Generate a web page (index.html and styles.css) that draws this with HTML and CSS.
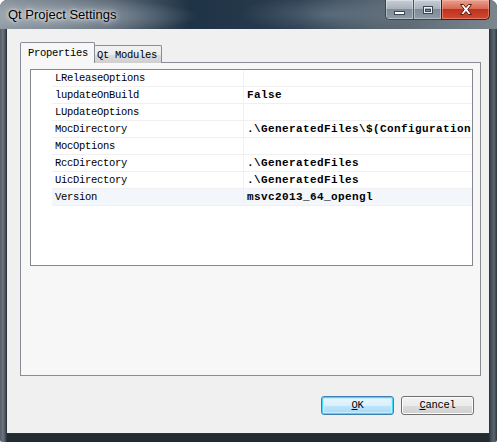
FILE: index.html
```html
<!DOCTYPE html>
<html>
<head>
<meta charset="utf-8">
<link rel="stylesheet" href="styles.css">
</head>
<body>
<div class="window">
  <div class="titlebar">
    <span class="title">Qt Project Settings</span>
    <div class="caption">
      <div class="cb-group">
        <div class="cb cb-min"><svg width="12" height="6" viewBox="0 0 12 6"><rect x="0.5" y="1.5" width="10" height="3" fill="#fff" stroke="#3b4550" stroke-width="1"/></svg></div>
        <div class="cb cb-max"><svg width="12" height="10" viewBox="0 0 12 10"><rect x="1.5" y="1.5" width="9" height="7" fill="none" stroke="#3b4550" stroke-width="1"/><rect x="2.5" y="2.5" width="7" height="5" fill="none" stroke="#eef" stroke-width="1"/><rect x="3.5" y="4.5" width="5" height="2" fill="none" stroke="#3b4550" stroke-width="1"/></svg></div>
      </div>
      <div class="cb cb-close"><svg width="14" height="11" viewBox="0 0 14 11"><path d="M1.5 0.5 H4.5 L7 3.5 L9.5 0.5 H12.5 L8.8 5.5 L12.5 10.5 H9.5 L7 7.5 L4.5 10.5 H1.5 L5.2 5.5 Z" fill="#fff" stroke="#5a1a10" stroke-width="1"/></svg></div>
    </div>
  </div>
  <div class="client">
    <div class="tabs">
      <div class="tab tab-active">Properties</div>
      <div class="tab">Qt Modules</div>
    </div>
    <div class="pane">
      <div class="tree">
        <div class="row"><div class="name">LReleaseOptions</div><div class="value"></div></div>
        <div class="row"><div class="name">lupdateOnBuild</div><div class="value">False</div></div>
        <div class="row"><div class="name">LUpdateOptions</div><div class="value"></div></div>
        <div class="row"><div class="name">MocDirectory</div><div class="value">.\GeneratedFiles\$(Configuration)</div></div>
        <div class="row"><div class="name">MocOptions</div><div class="value"></div></div>
        <div class="row"><div class="name">RccDirectory</div><div class="value">.\GeneratedFiles</div></div>
        <div class="row"><div class="name">UicDirectory</div><div class="value">.\GeneratedFiles</div></div>
        <div class="row row-hover"><div class="name">Version</div><div class="value">msvc2013_64_opengl</div></div>
      </div>
    </div>
    <div class="buttons">
      <div class="btn btn-default"><u>O</u>K</div>
      <div class="btn"><u>C</u>ancel</div>
    </div>
  </div>
</div>
</body>
</html>
```

FILE: styles.css
```css
html, body {
  margin: 0;
  padding: 0;
  background: #ffffff;
}

.window {
  width: 497px;
  height: 442px;
  box-sizing: border-box;
  padding: 0 8px 9px 7px;
  border-radius: 7px 7px 2px 2px;
  background:
    linear-gradient(90deg, #565f68 0px, #6c757e 3px, #3c4650 6px, transparent 7px, transparent 489px, #3a444e 490px, #5c666f 494px, #2e363e 497px),
    linear-gradient(180deg, #59636d 0px, #3f4b57 30px, #222a32 100%);
  display: flex;
  flex-direction: column;
  overflow: hidden;
}

.titlebar {
  height: 29px;
  position: relative;
  margin: 0 -8px 0 -7px;
  padding-left: 8px;
  display: flex;
  align-items: flex-start;
  background:
    radial-gradient(ellipse 140px 18px at 60px 16px, rgba(190,200,210,0.55), rgba(190,200,210,0) 100%),
    radial-gradient(ellipse 90px 20px at 330px 14px, rgba(150,165,180,0.35), rgba(150,165,180,0) 100%),
    linear-gradient(90deg, #8a949d 0px, #5e6b77 110px, #1f3346 190px, #2a3d4f 300px, #56646f 380px, #7b858e 497px);
  border-radius: 7px 7px 0 0;
}

.title {
  font-family: "Liberation Sans", Arial, sans-serif;
  font-size: 13px;
  color: #000;
  margin-top: 7px;
  text-shadow: 0 0 6px rgba(255,255,255,0.9), 0 0 3px rgba(255,255,255,0.8);
}

.caption {
  position: absolute;
  top: 0;
  right: 7px;
  display: flex;
}

.cb-group {
  display: flex;
  border: 1px solid #3a4450;
  border-top: none;
  border-right: none;
  border-radius: 0 0 0 5px;
  overflow: hidden;
}

.cb {
  height: 19px;
  display: flex;
  align-items: center;
  justify-content: center;
}

.cb-min, .cb-max {
  width: 27px;
  background: linear-gradient(180deg, #c6ced6 0%, #a9b3bd 45%, #7f8b97 50%, #8e9aa6 100%);
  box-shadow: inset 0 0 0 1px rgba(255,255,255,0.35);
}

.cb-min {
  border-right: 1px solid #4a5560;
}

.cb-min svg {
  margin-top: 6px;
}

.cb-close {
  width: 47px;
  height: 19px;
  border: 1px solid #3a2020;
  border-top: none;
  border-radius: 0 0 5px 0;
  background: linear-gradient(180deg, #e8a090 0%, #d86a55 45%, #c0321d 50%, #cf4a30 100%);
  box-shadow: inset 0 0 0 1px rgba(255,200,180,0.4);
}

.client {
  width: 482px;
  height: 404px;
  box-sizing: border-box;
  background: #f0f0f0;
  padding: 13px 8px 0 13px;
  display: flex;
  flex-direction: column;
  box-shadow: 0 0 0 1px #2b333b;
}

.tabs {
  display: flex;
  align-items: flex-end;
  height: 21px;
  margin-bottom: -1px;
  position: relative;
  z-index: 1;
}

.tab {
  font-family: "Liberation Mono", "DejaVu Sans Mono", monospace;
  font-size: 10.5px;
  letter-spacing: -0.3px;
  color: #000;
  box-sizing: border-box;
  height: 18px;
  width: 68px;
  border: 1px solid #898c95;
  border-bottom: none;
  border-left: none;
  background: linear-gradient(180deg, #f2f2f2 0%, #ebebeb 50%, #dddddd 51%, #cfcfcf 100%);
  padding-left: 3px;
  padding-top: 3px;
  border-radius: 2px 2px 0 0;
}

.tab-active {
  height: 21px;
  width: 75px;
  border-left: 1px solid #898c95;
  border-right: 1px solid #898c95;
  background: #f7f7f7;
  padding-left: 7px;
  padding-top: 4px;
  margin-right: -1px;
  position: relative;
  z-index: 2;
}

.pane {
  width: 461px;
  height: 314px;
  box-sizing: border-box;
  border: 1px solid #898c95;
  background: #f7f7f7;
  padding: 6px 0 0 9px;
}

.tree {
  width: 443px;
  height: 197px;
  box-sizing: border-box;
  border: 1px solid #828790;
  background: #ffffff;
  overflow: hidden;
}

.row {
  display: flex;
  height: 17px;
  box-sizing: border-box;
  border-bottom: 1px solid #f0f0f0;
  margin-left: 21px;
  line-height: 16px;
  white-space: nowrap;
}

.row-hover {
  background: #f3f6fb;
}

.name {
  width: 192px;
  flex: none;
  box-sizing: border-box;
  padding-left: 3px;
  border-right: 1px solid #f0f0f0;
  font-family: "Liberation Mono", "DejaVu Sans Mono", monospace;
  font-size: 10.5px;
  letter-spacing: -0.3px;
  color: #000;
}

.value {
  flex: 1;
  overflow: hidden;
  padding-left: 3px;
  font-family: "Liberation Mono", "DejaVu Sans Mono", monospace;
  font-size: 11px;
  font-weight: bold;
  letter-spacing: 0.4px;
  color: #000;
}

.buttons {
  display: flex;
  justify-content: flex-end;
  gap: 7px;
  margin-top: 20px;
  padding-right: 7px;
}

.btn {
  width: 73px;
  height: 19px;
  box-sizing: border-box;
  border: 1px solid #707070;
  border-radius: 3px;
  background: linear-gradient(180deg, #f2f2f2 0%, #ebebeb 50%, #dddddd 51%, #cfcfcf 100%);
  box-shadow: inset 0 0 0 1px #fcfcfc;
  font-family: "Liberation Mono", "DejaVu Sans Mono", monospace;
  font-size: 10.5px;
  letter-spacing: -0.3px;
  color: #000;
  text-align: center;
  line-height: 17px;
}

.btn-default {
  border-color: #3c7fb1;
  box-shadow: inset 0 0 0 1px #48d8fb, inset 0 0 0 2px #c6ecfb;
  background: linear-gradient(180deg, #eaf6fd 0%, #d9f0fc 50%, #bee6fd 51%, #a7d9f5 100%);
}
```
